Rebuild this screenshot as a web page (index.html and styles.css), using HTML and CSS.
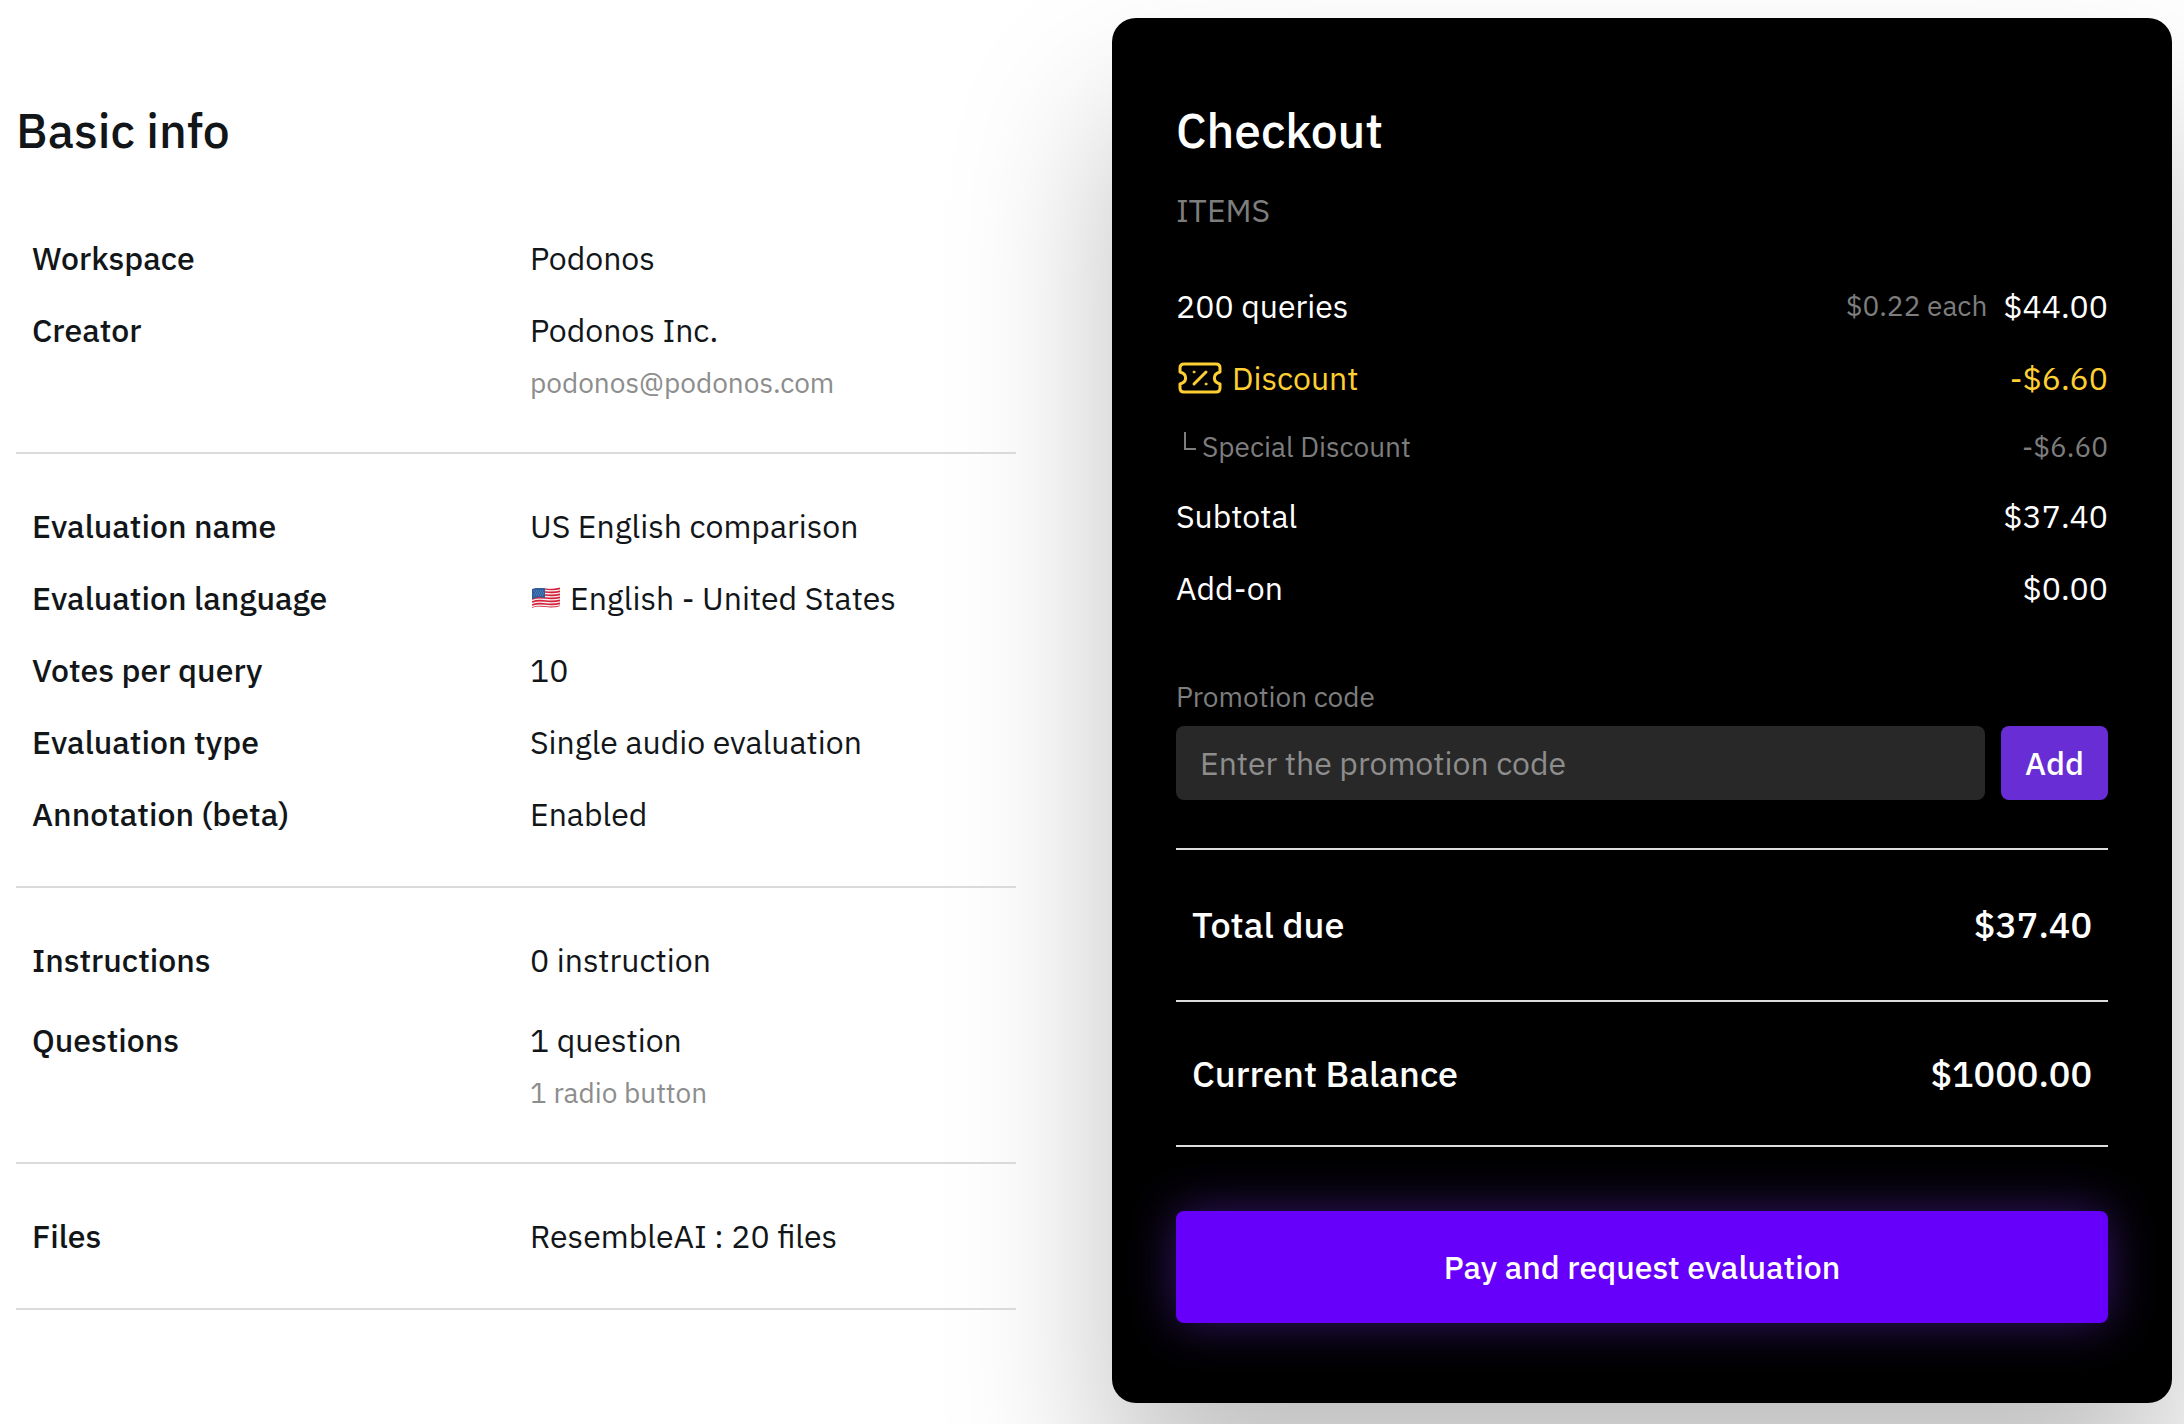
FILE: index.html
```html
<!DOCTYPE html>
<html lang="en">
<head>
    <meta charset="UTF-8">
    <meta name="viewport" content="width=device-width, initial-scale=1.0">
    <title>Checkout</title>
    <link rel="stylesheet" href="styles.css">
</head>
<body>
    <main class="page">
        <section class="info">
            <h1 class="title">Basic info</h1>

            <dl class="info-group first">
                <div class="info-row">
                    <dt>Workspace</dt>
                    <dd>Podonos</dd>
                </div>
                <div class="info-row">
                    <dt>Creator</dt>
                    <dd>Podonos Inc. <span class="note">podonos@podonos.com</span></dd>
                </div>
            </dl>

            <dl class="info-group">
                <div class="info-row">
                    <dt>Evaluation name</dt>
                    <dd>US English comparison</dd>
                </div>
                <div class="info-row">
                    <dt>Evaluation language</dt>
                    <dd class="language">
                        <svg class="flag" viewBox="0 0 32 24" aria-hidden="true">
                            <clipPath id="flag-shape">
                                <path d="M2 3C11 0 19 5 30 1V20C19 24 11 18 2 22Z"/>
                            </clipPath>
                            <g clip-path="url(#flag-shape)">
                                <rect width="32" height="24" fill="#f2f0f0"/>
                                <g fill="none" stroke="#d8203a" stroke-width="1.6">
                                    <path d="M2 4C12 0 19 6 31 2"/>
                                    <path d="M2 7C12 3 19 9 31 5"/>
                                    <path d="M2 10C12 6 19 12 31 8"/>
                                    <path d="M2 13C12 9 19 15 31 11"/>
                                    <path d="M2 16C12 12 19 18 31 14"/>
                                    <path d="M2 19C12 15 19 21 31 17"/>
                                    <path d="M2 22C12 18 19 24 31 20"/>
                                </g>
                                <path d="M2 1H15V12C11 11 7 11 2 13Z" fill="#2b5f9f"/>
                                <path d="M4 5H14M5 7H14M4 9H14" stroke="#6f95c4" stroke-width="1" stroke-dasharray="1 1"/>
                            </g>
                        </svg>
                        English - United States
                    </dd>
                </div>
                <div class="info-row">
                    <dt>Votes per query</dt>
                    <dd>10</dd>
                </div>
                <div class="info-row">
                    <dt>Evaluation type</dt>
                    <dd>Single audio evaluation</dd>
                </div>
                <div class="info-row">
                    <dt>Annotation (beta)</dt>
                    <dd>Enabled</dd>
                </div>
            </dl>

            <dl class="info-group loose">
                <div class="info-row">
                    <dt>Instructions</dt>
                    <dd>0 instruction</dd>
                </div>
                <div class="info-row">
                    <dt>Questions</dt>
                    <dd>1 question <span class="note">1 radio button</span></dd>
                </div>
            </dl>

            <dl class="info-group">
                <div class="info-row">
                    <dt>Files</dt>
                    <dd>ResembleAI : 20 files</dd>
                </div>
            </dl>
        </section>

        <section class="checkout">
            <h2 class="title">Checkout</h2>
            <p class="items-label">ITEMS</p>

            <ul class="items">
                <li class="item">
                    <span>200 queries</span>
                    <span class="price"><small>$0.22 each</small> $44.00</span>
                </li>
                <li class="item discount">
                    <span class="item-name">
                        <svg class="ticket" viewBox="0 0 48 48" aria-hidden="true">
                            <path d="M8 10H40Q44 10 44 14V18C36.500 20 36.500 28 44 30V34Q44 38 40 38H8Q4 38 4 34V30C11.500 28 11.500 20 4 18V14Q4 10 8 10Z"/>
                            <path d="M18 30L30 18"/>
                            <circle cx="18" cy="18" r="1"/>
                            <circle cx="30" cy="30" r="1"/>
                        </svg>
                        Discount
                    </span>
                    <span>-$6.60</span>
                </li>
                <li class="item sub">
                    <span class="item-name"><i class="branch"></i>Special Discount</span>
                    <span>-$6.60</span>
                </li>
                <li class="item">
                    <span>Subtotal</span>
                    <span>$37.40</span>
                </li>
                <li class="item">
                    <span>Add-on</span>
                    <span>$0.00</span>
                </li>
            </ul>

            <form class="promo">
                <label for="promo-code">Promotion code</label>
                <div class="promo-row">
                    <input type="text" id="promo-code" placeholder="Enter the promotion code">
                    <button type="button" class="add-btn">Add</button>
                </div>
            </form>

            <div class="total total-due">
                <span>Total due</span>
                <span>$37.40</span>
            </div>
            <div class="total balance">
                <span>Current Balance</span>
                <span>$1000.00</span>
            </div>

            <button type="button" class="pay-btn">Pay and request evaluation</button>
        </section>
    </main>
</body>
</html>
```

FILE: styles.css
```css
* {
    box-sizing: border-box;
}
body {
    margin: 0;
    background: #fff;
    color: #121619;
    font-family: "IBM Plex Sans", Roboto, sans-serif;
    font-size: 32px;
    line-height: 48px;
}
h1, h2, p, dl, dd, ul {
    margin: 0;
    padding: 0;
}
input, button {
    border: none;
    border-radius: 8px;
    font: inherit;
}
button {
    color: #fff;
    font-weight: 500;
    cursor: pointer;
}
.page {
    display: grid;
    grid-template-columns: 1000fr 1060fr;
    align-items: start;
    gap: 96px;
    min-height: 100vh;
    padding: 18px 12px 20px 16px;
    overflow: hidden;
}
.title {
    font-size: 48px;
    font-weight: 500;
    line-height: 64px;
}

/* Basic info */
.info {
    position: relative;
    z-index: 1;
    padding-top: 80px;
}
.info-group {
    display: flex;
    flex-direction: column;
    gap: 24px;
    padding: 48px 16px;
    border-bottom: 2px solid #dadada;
}
.info-group.first {
    margin-top: 72px;
    padding-top: 0;
}
.info-group.loose {
    gap: 32px;
}
.info-row {
    display: grid;
    grid-template-columns: 1fr 1fr;
    gap: 28px;
}
.info-row dt {
    font-weight: 500;
}
.language {
    display: flex;
    align-items: center;
    gap: 8px;
}
.flag {
    width: 32px;
    height: 24px;
}
.note {
    display: block;
    margin-top: 8px;
    color: #8d8d8d;
    font-size: 28px;
    line-height: 42px;
}

/* Checkout card */
.checkout {
    padding: 80px 64px;
    border-radius: 24px;
    background: #000;
    color: #fff;
    box-shadow: 0 100px 160px rgba(0, 0, 0, 0.25);
}
.items-label {
    margin-top: 24px;
    color: #7d7d7d;
}
.items {
    display: flex;
    flex-direction: column;
    gap: 24px;
    margin-top: 48px;
    list-style: none;
}
.item {
    display: flex;
    justify-content: space-between;
}
.item-name {
    display: flex;
    align-items: center;
    gap: 8px;
}
.price {
    display: flex;
    gap: 16px;
}
.price small {
    color: #7d7d7d;
    font-size: 28px;
}
.discount {
    color: #fecf33;
}
.ticket {
    width: 48px;
    height: 48px;
    fill: none;
    stroke: currentColor;
    stroke-width: 3;
    stroke-linecap: round;
    stroke-linejoin: round;
}
.ticket circle {
    fill: currentColor;
    stroke-width: 1;
}
.sub {
    color: #7d7d7d;
    font-size: 28px;
    line-height: 42px;
}
.sub .item-name {
    gap: 6px;
}
.branch {
    width: 12px;
    height: 18px;
    margin: 0 0 12px 8px;
    border-bottom: 2px solid;
    border-left: 2px solid;
}
.promo {
    margin-top: 64px;
}
.promo label {
    display: block;
    margin-bottom: 8px;
    color: #7d7d7d;
    font-size: 28px;
    line-height: 42px;
}
.promo-row {
    display: flex;
    gap: 16px;
    height: 74px;
}
.promo-row input {
    flex: 1;
    min-width: 0;
    padding: 0 24px;
    background: #282828;
    color: #fff;
}
.promo-row input::placeholder {
    color: #8d8d8d;
}
.add-btn {
    padding: 0 24px;
    background: #682dd4;
}
.total {
    display: flex;
    justify-content: space-between;
    border-bottom: 2px solid #ddd;
    font-size: 36px;
    font-weight: 500;
    line-height: 54px;
}
.total-due {
    margin-top: 48px;
    padding: 48px 16px;
    border-top: 2px solid #ddd;
}
.balance {
    padding: 45px 16px 44px;
}
.pay-btn {
    width: 100%;
    height: 112px;
    margin-top: 64px;
    background: #6700fa;
    box-shadow: 0 0 48px rgba(104, 44, 214, 0.5);
}
```
